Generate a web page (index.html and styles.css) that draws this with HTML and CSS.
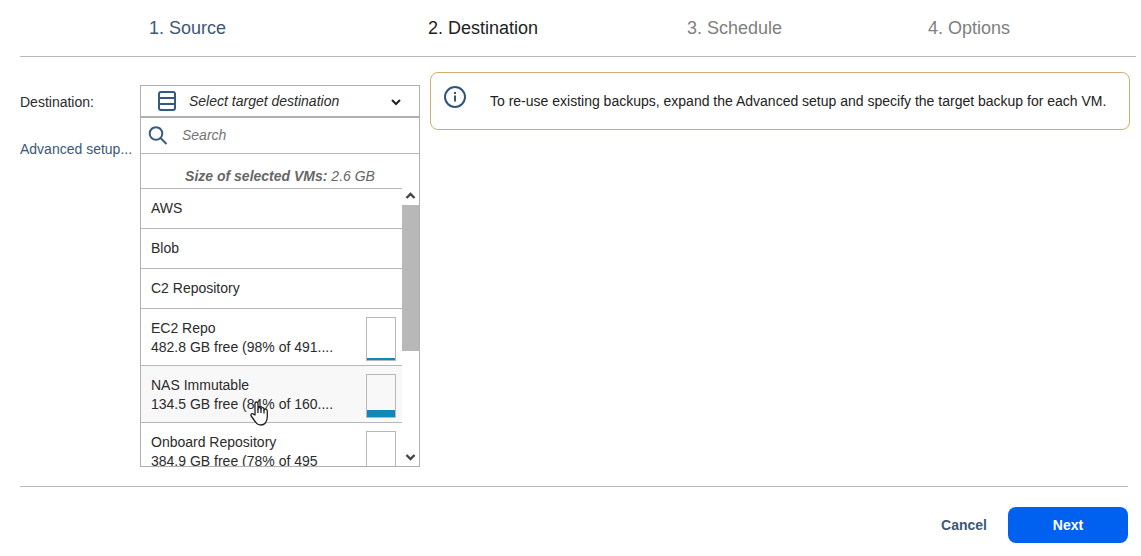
FILE: index.html
```
<!DOCTYPE html>
<html lang="en">
<head>
	<meta charset="utf-8">
	<title>Destination</title>
	<link rel="stylesheet" href="styles.css">
</head>
<body>
<nav class="steps">
	<a class="step done" href="#source">1. Source</a>
	<a class="step current" href="#destination" aria-current="step">2. Destination</a>
	<a class="step" href="#schedule">3. Schedule</a>
	<a class="step" href="#options">4. Options</a>
</nav>
<main class="content">
	<div class="labels">
		<label for="target">Destination:</label>
		<a class="advanced" href="#advanced">Advanced setup...</a>
	</div>
	<div class="picker">
		<div class="target">
			<svg class="target-icon" width="20" height="20" viewBox="0 0 20 20" fill="none" stroke="#345a80" stroke-width="2">
				<rect x="2" y="1" width="16" height="18" rx="2"/>
				<path d="M2 7h16M2 13h16"/>
			</svg>
			<select id="target">
				<option>Select target destination</option>
			</select>
			<svg class="target-arrow" width="10" height="7" viewBox="0 0 10 7" fill="none" stroke="#222" stroke-width="2">
				<path d="M1 1l4 4 4-4"/>
			</svg>
		</div>
		<div class="menu">
			<div class="search">
				<svg width="20" height="20" viewBox="0 0 20 20" fill="none" stroke="#3c5a80" stroke-width="2">
					<circle cx="8" cy="7.5" r="6.3"/>
					<path d="M12.500 12l6 6"/>
				</svg>
				<input type="text" placeholder="Search" aria-label="Search">
			</div>
			<p class="size"><b>Size of selected VMs:</b> 2.6 GB</p>
			<div class="scroll">
				<ul class="list">
					<li><button class="item">AWS</button></li>
					<li><button class="item">Blob</button></li>
					<li><button class="item">C2 Repository</button></li>
					<li><button class="item">
						<span class="info"><span>EC2 Repo</span><span>482.8 GB free (98% of 491....</span></span>
						<span class="gauge"><span class="used" style="height:2%"></span></span>
					</button></li>
					<li><button class="item hover">
						<span class="info"><span>NAS Immutable</span><span>134.5 GB free (84% of 160....</span></span>
						<span class="gauge"><span class="used" style="height:16%"></span></span>
						<svg class="pointer" width="19" height="25" viewBox="0 0 19 25" fill="#fff" stroke="#222" stroke-width="1.3" stroke-linejoin="round">
							<path d="M5 14V3q0-2 1.500-2T8 3v5q0-1.500 1.500-1.500T11 8q0-1.300 1.500-1.300T14 8.500v.7q0-1.200 1.500-1.200T17.300 10v6q0 3.500-2 6-1.500 2-4.500 2-3.300 0-5.300-3l-4.300-6q-.7-1.500.5-2.200 1-.5 2 .6z"/>
							<path d="M8 8v4M11 8v4M14 9v3.500" fill="none"/>
						</svg>
					</button></li>
					<li><button class="item">
						<span class="info"><span>Onboard Repository</span><span>384.9 GB free (78% of 495</span></span>
						<span class="gauge"></span>
					</button></li>
				</ul>
				<div class="scrollbar">
					<svg width="17" height="17" viewBox="0 0 17 17" fill="none" stroke="#444" stroke-width="2.4">
						<path d="M4.500 10l4-4 4 4"/>
					</svg>
					<div class="thumb"></div>
					<svg width="17" height="16" viewBox="0 0 17 16" fill="none" stroke="#444" stroke-width="2.4">
						<path d="M4.500 5l4 4 4-4"/>
					</svg>
				</div>
			</div>
		</div>
	</div>
	<div class="notice">
		<svg width="24" height="24" viewBox="0 0 24 24" fill="none" stroke="#345578" stroke-width="2">
			<circle cx="12" cy="12" r="10"/>
			<path d="M12 10.500v6M12 7v2"/>
		</svg>
		<p>To re-use existing backups, expand the Advanced setup and specify the target backup for each VM.</p>
	</div>
</main>
<footer class="footer">
	<button class="cancel">Cancel</button>
	<button class="next">Next</button>
</footer>
</body>
</html>
```
FILE: styles.css
```
*{
	box-sizing:border-box;
	margin:0;
	padding:0;
}
body{
	background:#fff;
	color:#2b2b2b;
	font:14px/19px "Liberation Sans", Arial, sans-serif;
}
a{
	color:#3c5876;
	text-decoration:none;
}
button, input, select{
	border:0;
	background:none;
	color:inherit;
	font:inherit;
}
button{
	cursor:pointer;
}
.steps{
	display:grid;
	grid-template-columns:279fr 259fr 241fr 208fr;
	margin:0 5px 0 20px;
	padding:16px 0 16px 129px;
	border-bottom:1px solid #b8b8b8;
	font-size:18px;
	line-height:24px;
}
.step{
	color:#808080;
}
.step.done{
	color:#3c5876;
}
.step.current{
	color:#222;
}
.content{
	display:flex;
	align-items:flex-start;
	padding:15px 11px 19px 20px;
}
.labels{
	display:flex;
	flex-direction:column;
	gap:28px;
	width:120px;
	padding-top:21px;
}
.picker{
	width:280px;
	margin:13px 10px 0 0;
}
.target{
	position:relative;
	height:31px;
	border:1px solid #b0b0b0;
	border-bottom:0;
}
.target select{
	width:100%;
	height:100%;
	padding-left:48px;
	appearance:none;
	font-style:italic;
}
.target svg{
	position:absolute;
	pointer-events:none;
}
.target-icon{
	left:16px;
	top:5px;
}
.target-arrow{
	right:18px;
	top:13px;
}
.menu{
	border:1px solid #b0b0b0;
	border-top:2px solid #b0b0b0;
}
.search{
	display:flex;
	align-items:center;
	gap:14px;
	height:36px;
	padding:0 7px;
	border-bottom:1px solid #b8b8b8;
}
.search input{
	flex:1;
	min-width:0;
	font-style:italic;
	outline:0;
}
.search input::placeholder{
	color:#757575;
}
.size{
	padding:13px 0 2px;
	color:#666;
	font-style:italic;
	text-align:center;
}
.scroll{
	display:flex;
	height:278px;
}
.list{
	flex:1;
	min-width:0;
	overflow:hidden;
	list-style:none;
	border-top:1px solid #b8b8b8;
}
.item{
	display:flex;
	position:relative;
	justify-content:space-between;
	align-items:flex-start;
	width:100%;
	padding:10px 6px 10px 10px;
	border-bottom:1px solid #b8b8b8;
	text-align:left;
}
.item:has(.gauge){
	padding-top:8px;
	padding-bottom:4px;
}
.item.hover{
	background:#f8f8f8;
}
.info{
	width:188px;
	padding-top:2px;
}
.info span{
	display:block;
	overflow:hidden;
	text-overflow:ellipsis;
	white-space:nowrap;
}
.gauge{
	display:flex;
	align-items:flex-end;
	width:30px;
	height:44px;
	border:1px solid #b8b8b8;
}
.used{
	width:100%;
	min-height:2px;
	background:#0f87b8;
}
.pointer{
	position:absolute;
	left:109px;
	top:35px;
}
.scrollbar{
	display:flex;
	flex-direction:column;
	width:17px;
}
.scrollbar svg{
	flex:none;
}
.scrollbar svg:last-child{
	margin-top:auto;
}
.thumb{
	height:146px;
	background:#b8b8b8;
}
.notice{
	display:flex;
	flex:1;
	gap:23px;
	min-height:58px;
	padding:12px;
	border:1px solid #d0ae70;
	border-radius:8px;
	color:#222;
}
.notice svg{
	flex:none;
}
.notice p{
	padding-top:7px;
}
.footer{
	display:flex;
	justify-content:flex-end;
	gap:21px;
	margin:0 13px 0 20px;
	padding-top:20px;
	border-top:1px solid #b8b8b8;
}
.footer button{
	height:36px;
	font-weight:bold;
}
.footer .cancel{
	color:#3c5876;
}
.footer .next{
	width:120px;
	border-radius:8px;
	background:#0060f0;
	color:#fff;
}
```
